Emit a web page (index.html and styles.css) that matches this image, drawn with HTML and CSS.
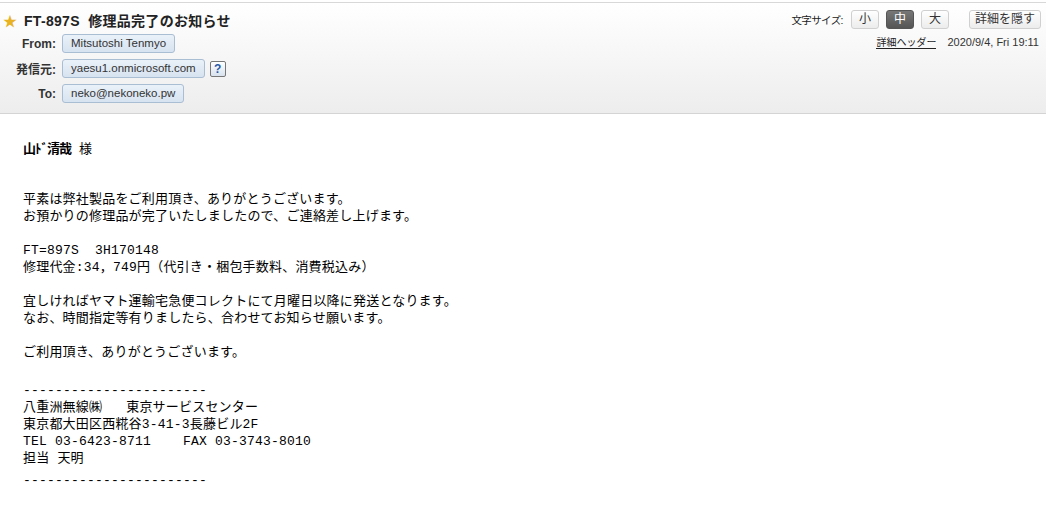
FILE: index.html
```html
<!DOCTYPE html>
<html lang="ja">
<head>
    <meta charset="UTF-8">
    <title>FT-897S 修理品完了のお知らせ</title>
    <link rel="stylesheet" href="styles.css">
</head>
<body>
    <div class="header">
        <div class="header-left">
            <div class="subject">
                <span class="star">&#9733;</span>
                <span class="subject-text">FT-897S&nbsp;&nbsp;修理品完了のお知らせ</span>
            </div>
            <div class="field">
                <span class="label">From:</span>
                <span class="pill">Mitsutoshi Tenmyo</span>
            </div>
            <div class="field">
                <span class="label">発信元:</span>
                <span class="pill">yaesu1.onmicrosoft.com</span>
                <span class="help">?</span>
            </div>
            <div class="field">
                <span class="label">To:</span>
                <span class="pill">neko@nekoneko.pw</span>
            </div>
        </div>
        <div class="header-right">
            <div class="tools">
                <span class="size-label">文字サイズ:</span>
                <span class="btn">小</span>
                <span class="btn active">中</span>
                <span class="btn">大</span>
                <span class="btn hide-btn">詳細を隠す</span>
            </div>
            <div class="meta">
                <a class="detail-link" href="#">詳細ヘッダー</a>
                <span class="date">2020/9/4, Fri 19:11</span>
            </div>
        </div>
    </div>

    <div class="message">
        <p class="greeting"><span class="blur">山ﾄﾞ清哉</span> 様</p>

        <p>平素は弊社製品をご利用頂き、ありがとうございます。<br>
        お預かりの修理品が完了いたしましたので、ご連絡差し上げます。</p>

        <p>FT=897S&nbsp;&nbsp;3H170148<br>
        修理代金:34，749円（代引き・梱包手数料、消費税込み）</p>

        <p>宜しければヤマト運輸宅急便コレクトにて月曜日以降に発送となります。<br>
        なお、時間指定等有りましたら、合わせてお知らせ願います。</p>

        <p>ご利用頂き、ありがとうございます。</p>

        <p class="signature">-----------------------<br>
        八重洲無線㈱&nbsp;&nbsp;&nbsp;東京サービスセンター<br>
        東京都大田区西糀谷3-41-3長藤ビル2F<br>
        TEL 03-6423-8711&nbsp;&nbsp;&nbsp;&nbsp;FAX 03-3743-8010<br>
        担当 天明<br>
        <span class="rule">-----------------------</span></p>
    </div>
</body>
</html>
```

FILE: styles.css
```css
body {
    margin: 0;
    padding: 0;
    font-family: "Liberation Sans", "Noto Sans CJK JP", sans-serif;
    background-color: #fff;
    color: #000;
}

.header {
    display: flex;
    justify-content: space-between;
    margin-top: 2px;
    border-top: 1px solid #d8d8d8;
    border-bottom: 1px solid #d4d4d4;
    background: linear-gradient(#fff, #ededed);
    height: 110px;
    font-size: 12px;
    color: #222;
}

.header-left {
    padding: 5px 0 0 3px;
}

.subject {
    display: flex;
    align-items: center;
    height: 23px;
}

.star {
    color: #e8b222;
    font-size: 14px;
    width: 21px;
}

.subject-text {
    font-size: 14px;
    font-weight: bold;
    color: #222;
    letter-spacing: 0.3px;
}

.field {
    display: flex;
    align-items: center;
    height: 25px;
}

.label {
    width: 53px;
    text-align: right;
    font-weight: bold;
    color: #333;
    margin-right: 6px;
}

.pill {
    display: inline-block;
    border: 1px solid #a9bdd3;
    border-radius: 3px;
    background: linear-gradient(#eaf1f9, #d7e3f0);
    padding: 1px 8px;
    height: 15px;
    line-height: 15px;
    font-size: 11.5px;
    color: #333;
}

.help {
    display: inline-block;
    width: 14px;
    height: 14px;
    line-height: 14px;
    margin-left: 5px;
    border: 1px solid #777;
    border-radius: 2px;
    background: linear-gradient(#fff, #d8e2ee);
    color: #2a5aa8;
    font-weight: bold;
    font-size: 12px;
    text-align: center;
}

.header-right {
    padding: 6px 5px 0 0;
    text-align: right;
}

.tools {
    display: flex;
    align-items: center;
    justify-content: flex-end;
    height: 20px;
}

.size-label {
    font-size: 10.5px;
    letter-spacing: -0.6px;
    margin-right: 1px;
}

.btn {
    display: inline-block;
    border: 1px solid #d0d0d0;
    border-radius: 3px;
    background: linear-gradient(#fff, #ececec);
    height: 17px;
    line-height: 17px;
    padding: 0 7px;
    margin-left: 7px;
    color: #333;
}

.btn.active {
    background: linear-gradient(#777, #555);
    border-color: #555;
    color: #fff;
}

.hide-btn {
    margin-left: 20px;
    padding: 0 5px;
}

.meta {
    margin-top: 5px;
    font-size: 11px;
}

.detail-link {
    font-size: 10px;
    color: #222;
    text-decoration: none;
    border-bottom: 1px solid #222;
    margin-right: 8px;
}

.date {
    color: #333;
    margin-right: 2px;
}

.message {
    padding: 27px 23px 0;
    font-size: 13px;
    line-height: 17px;
    letter-spacing: 0.2px;
    font-family: "Liberation Mono", "Noto Sans CJK JP", monospace;
}

.message p {
    margin: 0 0 17px;
}

.greeting {
    margin-bottom: 33px !important;
}

.blur {
    font-weight: bold;
    letter-spacing: -1px;
}

.signature {
    padding-top: 4px;
}

.rule {
    display: inline-block;
    padding-top: 5px;
}
```
